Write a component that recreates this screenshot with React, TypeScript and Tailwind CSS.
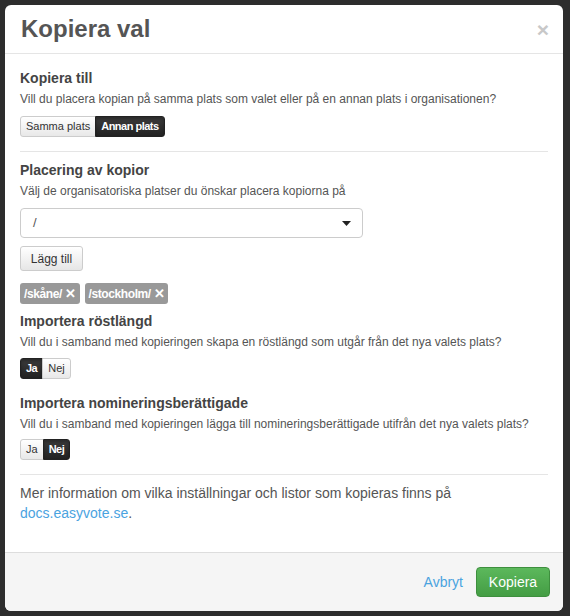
import { useState } from 'react';

const font = { fontFamily: '"Liberation Sans", Arial, sans-serif' };

function Toggle({ options, active, onChange }: { options: string[]; active: number; onChange: (i: number) => void }) {
  return (
    <div className="flex h-[21px] w-fit">
      {options.map((o, i) => {
        const on = i === active;
        const first = i === 0;
        const last = i === options.length - 1;
        return (
          <button
            key={o}
            onClick={() => onChange(i)}
            className={
              'flex items-center px-[5px] text-[11px] leading-none border ' +
              (first ? 'rounded-l-[3px] ' : '-ml-px ') +
              (last ? 'rounded-r-[3px] ' : '') +
              (on
                ? 'bg-gradient-to-b from-[#3c3c3c] to-[#222] border-[#222] text-white font-bold tracking-[-0.5px] shadow-[inset_0_2px_3px_rgba(0,0,0,0.3)]'
                : 'bg-gradient-to-b from-white to-[#e8e8e8] border-[#ccc] text-[#333]')
            }
          >
            {o}
          </button>
        );
      })}
    </div>
  );
}

function Heading({ children, className = '' }: { children: string; className?: string }) {
  return <h4 className={'text-[14px] font-bold leading-[20px] text-[#444] ' + className}>{children}</h4>;
}

function Help({ children }: { children: string }) {
  return <p className="mt-[3px] text-[12px] leading-[17px] text-[#555]">{children}</p>;
}

export default function App() {
  const [target, setTarget] = useState(1);
  const [voters, setVoters] = useState(0);
  const [nominees, setNominees] = useState(1);
  const [tags, setTags] = useState(['/skåne/', '/stockholm/']);

  return (
    <div className="min-h-screen bg-[#2d2d2d] pt-[5px] pl-[5px]" style={font}>
      <div className="flex h-[606px] w-[558px] flex-col overflow-hidden rounded-[6px] bg-white">
        <div className="flex h-[49px] items-center justify-between border-b border-[#e5e5e5] pl-[16px] pr-[14px]">
          <h3 className="text-[24px] font-bold leading-none text-[#555]">Kopiera val</h3>
          <button className="text-[21px] font-bold leading-none text-[#c8c8c8]">×</button>
        </div>

        <div className="flex flex-1 flex-col px-[15px] pt-[14px]">
          <Heading>Kopiera till</Heading>
          <Help>Vill du placera kopian på samma plats som valet eller på en annan plats i organisationen?</Help>
          <div className="mt-[8px]">
            <Toggle options={['Samma plats', 'Annan plats']} active={target} onChange={setTarget} />
          </div>

          <hr className="mt-[14px] border-[#e5e5e5]" />

          <Heading className="mt-[8px]">Placering av kopior</Heading>
          <Help>Välj de organisatoriska platser du önskar placera kopiorna på</Help>
          <div className="mt-[8px] flex h-[30px] w-[343px] items-center justify-between rounded-[4px] border border-[#ccc] pl-[12px] pr-[11px] text-[13px] text-[#555]">
            <span>/</span>
            <svg width="9" height="5" viewBox="0 0 9 5">
              <path d="M0 0h9L4.5 5z" fill="#222" />
            </svg>
          </div>
          <button className="mt-[8px] h-[25px] w-[63px] rounded-[3px] border border-[#ccc] bg-gradient-to-b from-white to-[#e6e6e6] text-[12px] text-[#333]">
            Lägg till
          </button>
          <div className="mt-[12px] flex gap-[5px]">
            {tags.map(t => (
              <span
                key={t}
                className="flex h-[21px] items-center gap-[3px] rounded-[3px] bg-[#999] px-[4px] text-[12px] font-bold tracking-[-0.4px] text-white"
              >
                {t}
                <button className="text-[13px] font-bold leading-none" onClick={() => setTags(tags.filter(x => x !== t))}>
                  ✕
                </button>
              </span>
            ))}
          </div>

          <Heading className="mt-[7px]">Importera röstlängd</Heading>
          <Help>Vill du i samband med kopieringen skapa en röstlängd som utgår från det nya valets plats?</Help>
          <div className="mt-[7px]">
            <Toggle options={['Ja', 'Nej']} active={voters} onChange={setVoters} />
          </div>

          <Heading className="mt-[14px]">Importera nomineringsberättigade</Heading>
          <Help>Vill du i samband med kopieringen lägga till nomineringsberättigade utifrån det nya valets plats?</Help>
          <div className="mt-[6px]">
            <Toggle options={['Ja', 'Nej']} active={nominees} onChange={setNominees} />
          </div>

          <hr className="mt-[14px] border-[#e5e5e5]" />

          <p className="mt-[8px] text-[14px] leading-[20px] text-[#555]">
            Mer information om vilka inställningar och listor som kopieras finns på{' '}
            <a className="text-[#4aa3df]">docs.easyvote.se</a>.
          </p>
        </div>

        <div className="flex h-[59px] items-center justify-end gap-[13px] border-t border-[#ddd] bg-[#f5f5f5] pr-[13px]">
          <a className="text-[14px] text-[#4aa3df]">Avbryt</a>
          <button className="h-[30px] w-[74px] rounded-[4px] border border-[#3e8f3e] bg-gradient-to-b from-[#5cb85c] to-[#449d44] text-[14px] text-white">
            Kopiera
          </button>
        </div>
      </div>
    </div>
  );
}
